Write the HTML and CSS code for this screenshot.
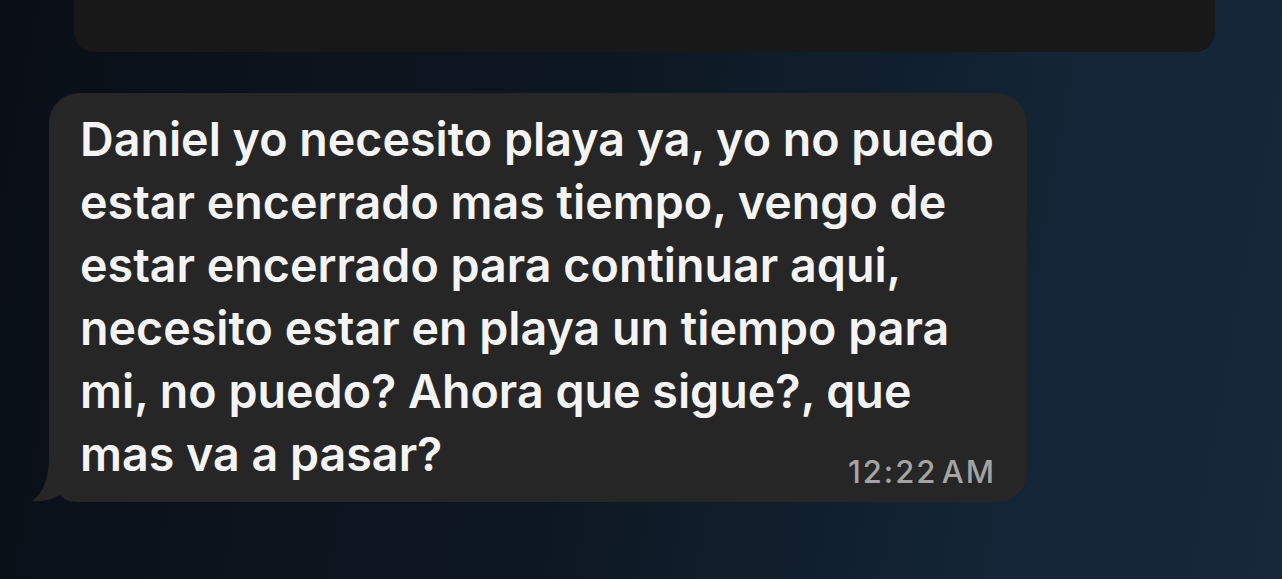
FILE: index.html
```html
<!DOCTYPE html>
<html lang="en">
<head>
    <meta charset="UTF-8">
    <meta name="viewport" content="width=device-width, initial-scale=1.0">
    <title>Mensaje</title>
    <link rel="stylesheet" href="styles.css">
</head>
<body>

    <div class="chat">
        <div class="card-prev"></div>

        <div class="bubble">
            <p class="bubble-text">Daniel yo necesito playa ya, yo no puedo<br>estar encerrado mas tiempo, vengo de<br>estar encerrado para continuar aqui,<br>necesito estar en playa un tiempo para<br>mi, no puedo? Ahora que sigue?, que<br>mas va a pasar?</p>
            <span class="bubble-time">12:22 AM</span>

            <!-- tail at bottom left -->
            <svg class="bubble-tail" width="40" height="50" viewBox="0 0 40 50">
                <path d="M17 0 L17 2 C17 24 12 40 0 48 C10 49 20 47 28 42 C32 46 36 48 40 49 L40 0 Z" fill="#262626"/>
            </svg>
        </div>
    </div>

</body>
</html>
```

FILE: styles.css
```css
html, body {
    height: 100%;
}
body {
    margin: 0;
    font-family: Inter, 'Noto Sans', sans-serif;
    background: linear-gradient(100deg, #0a0f17 0%, #0d1722 45%, #132536 80%, #15293a 100%);
    color: #fff;
    overflow: hidden;
}
.chat {
    display: flex;
    flex-direction: column;
    align-items: flex-start;
}
.card-prev {
    width: 1141px;
    height: 52px;
    margin-left: 74px;
    background-color: #181818;
    border-radius: 0 0 20px 20px;
}
.bubble {
    position: relative;
    width: 916px;
    margin-top: 41px;
    margin-left: 49px;
    padding: 15px 31px 12px 31px;
    background-color: #262626;
    border-radius: 30px;
    display: flex;
    flex-direction: column;
}
.bubble-text {
    margin: 0;
    font-size: 46.6px;
    font-weight: 600;
    line-height: 63px;
    color: #f4f4f4;
}
.bubble-time {
    align-self: flex-end;
    margin-top: -32px;
    margin-right: 0;
    font-size: 31px;
    line-height: 36px;
    font-weight: 500;
    letter-spacing: 2px;
    word-spacing: -6px;
    color: #a4a4a4;
}
.bubble-tail {
    position: absolute;
    left: -17px;
    bottom: -1px;
}
```
